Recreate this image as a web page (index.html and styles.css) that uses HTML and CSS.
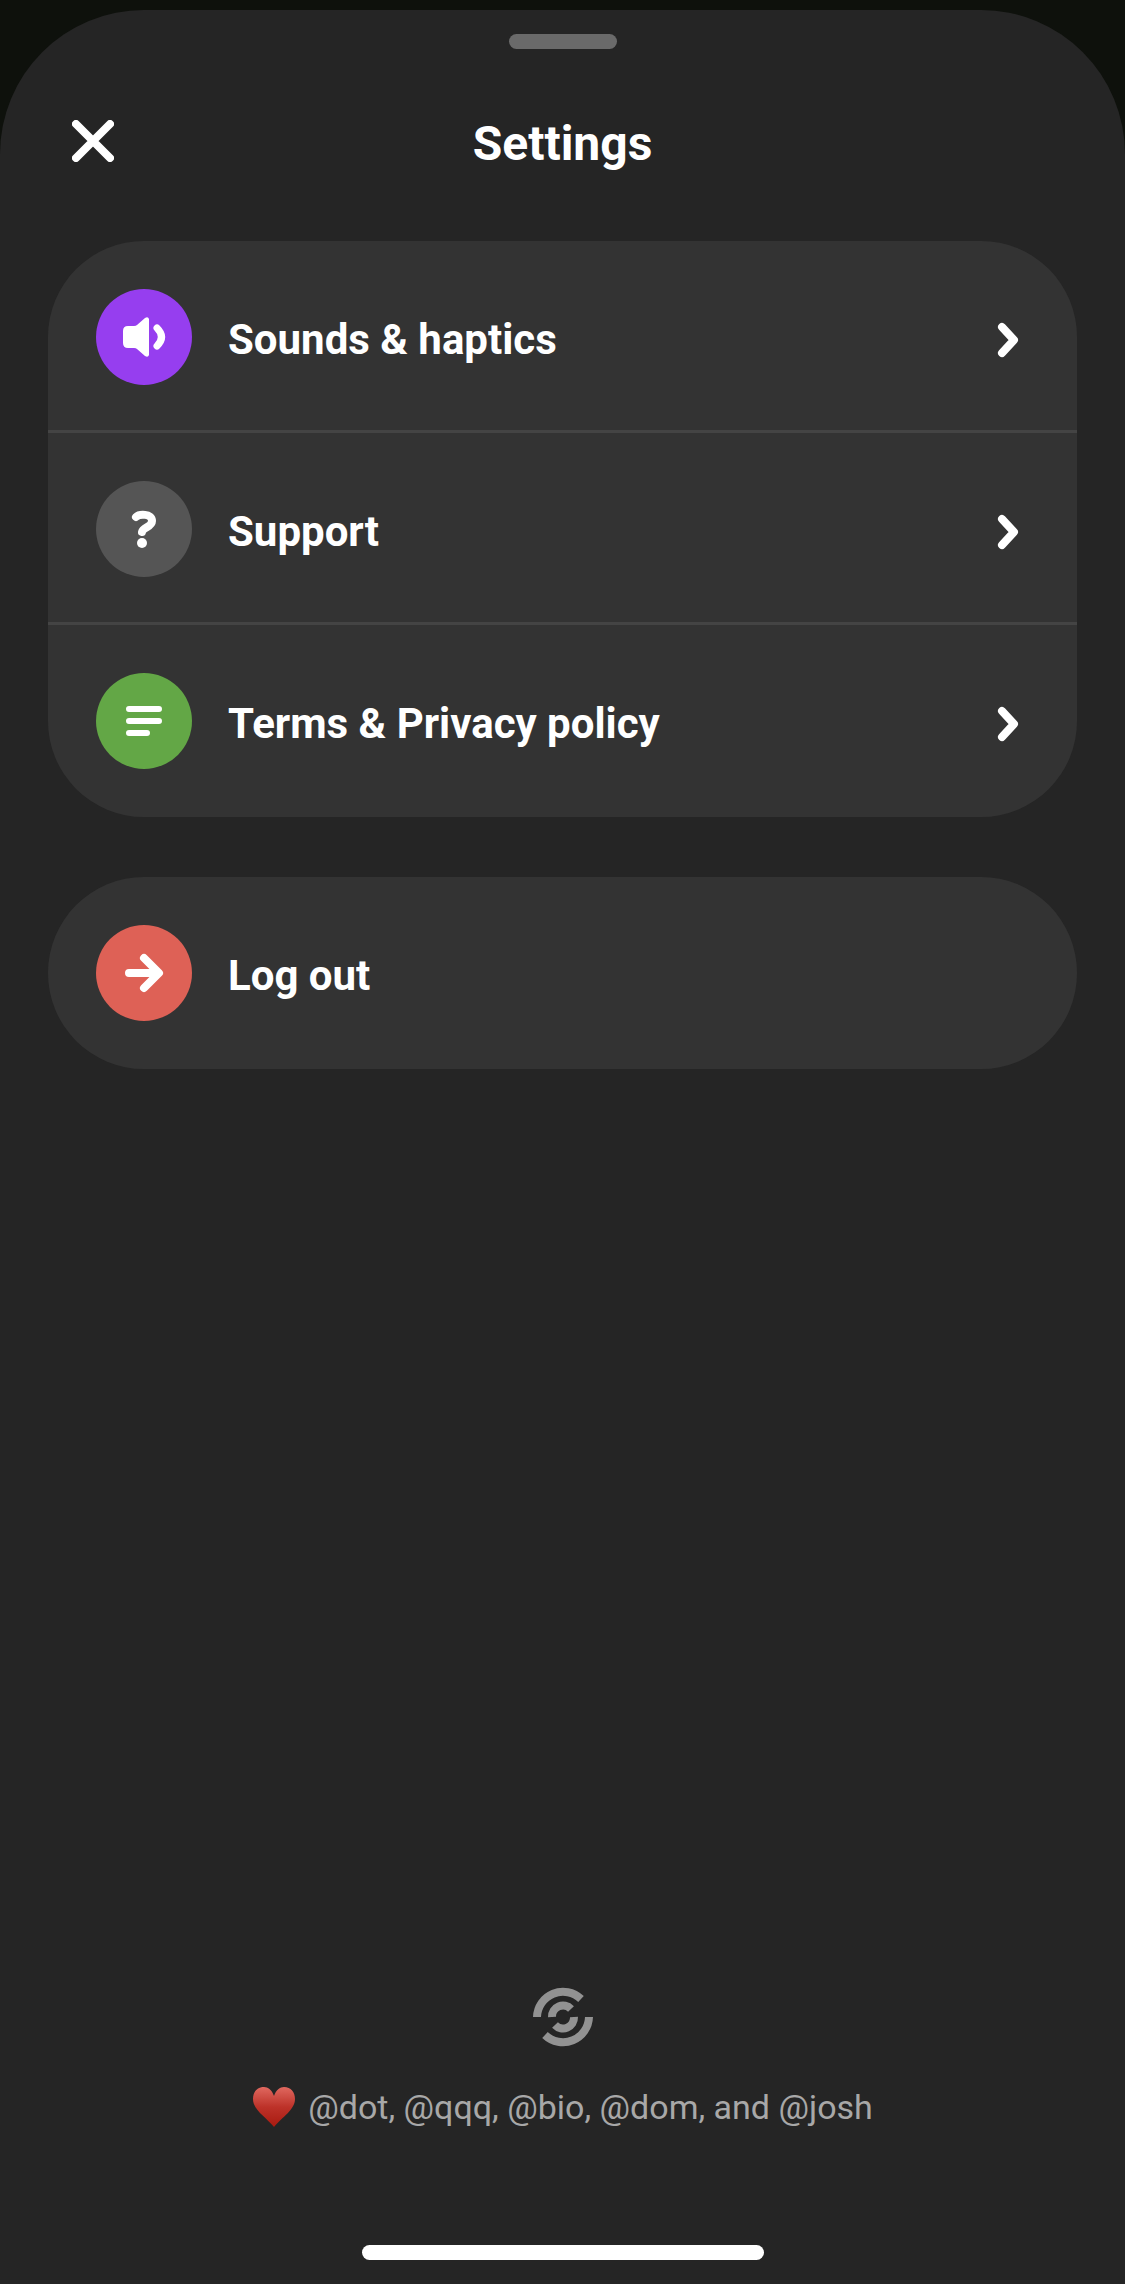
FILE: index.html
```html
<!DOCTYPE html>
<html lang="en">
<head>
    <meta charset="utf-8">
    <meta name="viewport" content="width=device-width, initial-scale=1">
    <title>Settings</title>
    <link rel="stylesheet" href="styles.css">
</head>
<body>
    <main class="sheet">
        <div class="handle"></div>

        <header class="header">
            <button type="button" class="close" aria-label="Close">
                <svg width="42" height="42" viewBox="0 0 42 42"><path d="M4 4L38 38M38 4L4 38"/></svg>
            </button>
            <h1>Settings</h1>
        </header>

        <nav class="card">
            <a class="row" href="#sounds">
                <span class="icon purple">
                    <svg width="96" height="96" viewBox="0 0 96 96">
                        <path class="solid" d="M32 37h6q2 0 3-1l8-7q3-2 4 1v36q-1 3-4 1l-8-7q-1-1-3-1h-6q-5 0-5-5V42q0-5 5-5z"/>
                        <path class="thin" d="M61 39Q70 48 61 57"/>
                    </svg>
                </span>
                <span class="label">Sounds &amp; haptics</span>
                <svg class="chevron" width="24" height="38" viewBox="0 0 24 38"><path d="M6 6L18 19L6 32"/></svg>
            </a>
            <a class="row" href="#support">
                <span class="icon gray">
                    <svg width="96" height="96" viewBox="0 0 96 96">
                        <path d="M40 36C43 33 56 32 56 40C56 46 47 46 46 51"/>
                        <circle class="solid" cx="46" cy="62" r="5"/>
                    </svg>
                </span>
                <span class="label">Support</span>
                <svg class="chevron" width="24" height="38" viewBox="0 0 24 38"><path d="M6 6L18 19L6 32"/></svg>
            </a>
            <a class="row" href="#terms">
                <span class="icon green">
                    <svg width="96" height="96" viewBox="0 0 96 96">
                        <path class="lines" d="M33 36H63M33 48H63M33 60H51"/>
                    </svg>
                </span>
                <span class="label">Terms &amp; Privacy policy</span>
                <svg class="chevron" width="24" height="38" viewBox="0 0 24 38"><path d="M6 6L18 19L6 32"/></svg>
            </a>
        </nav>

        <div class="card">
            <button type="button" class="row">
                <span class="icon red">
                    <svg width="96" height="96" viewBox="0 0 96 96">
                        <path d="M33 48H62M48 33L63 48L48 63"/>
                    </svg>
                </span>
                <span class="label">Log out</span>
            </button>
        </div>

        <footer class="footer">
            <svg class="logo" width="60" height="60" viewBox="0 0 60 60">
                <path d="M4 30A26 26 0 0 1 48 12M56 30A26 26 0 0 1 12 48"/>
                <path d="M19 30A11 11 0 0 1 38 22M41 30A11 11 0 0 1 22 38"/>
            </svg>
            <p class="credits">
                <svg class="heart" width="44" height="42" viewBox="0 0 44 42">
                    <defs>
                        <linearGradient id="heart" x1="0" y1="0" x2="0" y2="1">
                            <stop offset="0" stop-color="#e0685f"/>
                            <stop offset="0.5" stop-color="#bd3229"/>
                            <stop offset="1" stop-color="#a81a10"/>
                        </linearGradient>
                    </defs>
                    <path d="M22 10C20 4 16 1 12 1C5 1 1 6 1 13C1 24 14 31 22 41C30 31 43 24 43 13C43 6 39 1 32 1C28 1 24 4 22 10z"/>
                </svg>
                <span>@dot, @qqq, @bio, @dom, and @josh</span>
            </p>
        </footer>

        <div class="home-bar"></div>
    </main>
</body>
</html>
```
FILE: styles.css
```css
* {
    box-sizing: border-box;
}

body {
    margin: 0;
    padding-top: 10px;
    min-height: 100vh;
    display: flex;
    background-color: #0e110c;
    color: #fff;
    font-family: Roboto, sans-serif;
}

svg {
    display: block;
    fill: none;
    stroke: #fff;
    stroke-width: 8px;
    stroke-linecap: round;
    stroke-linejoin: round;
}

.sheet {
    flex: 1;
    display: flex;
    flex-direction: column;
    padding: 24px 48px;
    border-radius: 144px 144px 0 0;
    background-color: #252525;
}

.handle {
    align-self: center;
    width: 108px;
    height: 15px;
    border-radius: 8px;
    background-color: #6a6a6a;
}

.header {
    display: grid;
    grid-template-columns: 42px 1fr 42px;
    align-items: center;
    height: 192px;
    padding: 0 24px 8px;
}

.header h1 {
    margin: 0;
    padding-top: 6px;
    text-align: center;
    font-size: 48px;
    line-height: 60px;
    font-weight: 700;
}

.close {
    padding: 0;
    border: none;
    background: none;
    cursor: pointer;
}

.card {
    margin-bottom: 60px;
    border-radius: 96px;
    overflow: hidden;
    background-color: #333;
}

.row {
    display: flex;
    align-items: center;
    gap: 36px;
    width: 100%;
    height: 192px;
    padding: 0 57px 0 48px;
    border: none;
    background: none;
    color: #fff;
    font-family: inherit;
    text-align: left;
    text-decoration: none;
    cursor: pointer;
}

.row:not(:last-child) {
    box-shadow: inset 0 -3px #444;
}

.label {
    flex: 1;
    padding-top: 6px;
    font-size: 42px;
    line-height: 48px;
    font-weight: 700;
}

.chevron {
    margin-top: 6px;
}

.icon {
    width: 96px;
    height: 96px;
    border-radius: 50%;
}

.icon .solid {
    fill: #fff;
    stroke: none;
}

.icon .thin {
    stroke-width: 7px;
}

.icon .lines {
    stroke-width: 6px;
}

.purple {
    background-color: #963eef;
}

.gray {
    background-color: #555;
}

.green {
    background-color: #63a746;
}

.red {
    background-color: #de6156;
}

.footer {
    margin-top: auto;
    display: flex;
    flex-direction: column;
    align-items: center;
    gap: 36px;
}

.logo {
    stroke: #929292;
    stroke-linecap: butt;
}

.credits {
    display: flex;
    align-items: center;
    gap: 12px;
    margin: 0;
    color: #a8a8a8;
    font-size: 34px;
    line-height: 48px;
}

.heart {
    fill: url(#heart);
    stroke: none;
}

.home-bar {
    align-self: center;
    width: 402px;
    height: 15px;
    margin-top: 114px;
    border-radius: 8px;
    background-color: #fff;
}
```
